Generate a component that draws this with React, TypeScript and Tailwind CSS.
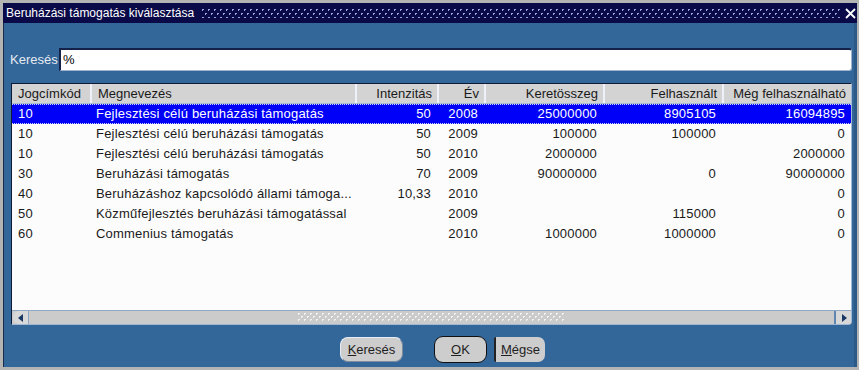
import React from 'react';

const rows = [
    ['10', 'Fejlesztési célú beruházási támogatás', '50', '2008', '25000000', '8905105', '16094895'],
    ['10', 'Fejlesztési célú beruházási támogatás', '50', '2009', '100000', '100000', '0'],
    ['10', 'Fejlesztési célú beruházási támogatás', '50', '2010', '2000000', '', '2000000'],
    ['30', 'Beruházási támogatás', '70', '2009', '90000000', '0', '90000000'],
    ['40', 'Beruházáshoz kapcsolódó állami támoga...', '10,33', '2010', '', '', '0'],
    ['50', 'Közműfejlesztés beruházási támogatással', '', '2009', '', '115000', '0'],
    ['60', 'Commenius támogatás', '', '2010', '1000000', '1000000', '0'],
];

const heads = ['Jogcímkód', 'Megnevezés', 'Intenzitás', 'Év', 'Keretösszeg', 'Felhasznált', 'Még felhasználható'];

const cols = 'grid grid-cols-[78px_265px_82px_47px_119px_119px_129px]';

const Dots = ({color, w, h}: {color: string; w: number; h: number}) => (
    <svg width="100%" height="100%" className="block">
        <defs>
            <pattern id={'p' + color.slice(1)} width={w} height={h} patternUnits="userSpaceOnUse">
                <rect x="0" y="0" width="2" height="1" fill={color}/>
                <rect x="0" y="1" width="1" height="1" fill={color}/>
                <rect x={w / 2} y={h / 2} width="2" height="1" fill={color}/>
                <rect x={w / 2} y={h / 2 + 1} width="1" height="1" fill={color}/>
            </pattern>
        </defs>
        <rect width="100%" height="100%" fill={'url(#p' + color.slice(1) + ')'}/>
    </svg>
);

const App = () => {
    return (
        <div className="w-[859px] h-[370px] bg-[#b4b4b4] pl-[3px] pt-[3px] pr-[2px] pb-[3px] flex flex-col font-['Liberation_Sans',Arial,sans-serif] text-[13px] overflow-hidden">
            {/* title bar */}
            <div className="h-[20px] bg-[#0a0a48] flex items-center pl-[3px] pr-[1px] shrink-0">
                <span className="text-white text-[12px] whitespace-nowrap">Beruházási támogatás kiválasztása</span>
                <div className="flex-1 h-[9px] ml-[8px] mr-[5px]">
                    <Dots color="#9aa4dc" w={6} h={8}/>
                </div>
                <svg width="11" height="11" viewBox="0 0 11 11">
                    <path d="M1 1 L10 10 M10 1 L1 10" stroke="#ffffff" strokeWidth="1.8"/>
                </svg>
            </div>

            {/* body */}
            <div className="flex-1 bg-[#336699] border-l border-[#1c2c48] border-r-[3px] border-r-[#2b5a88] pl-[7px] pr-[2px] pt-[25px] flex flex-col">
                <div className="flex h-[23px] items-center">
                    <span className="w-[49px] -ml-[1px] text-[#e6ebf2]">Keresés</span>
                    <div className="flex-1 h-full bg-white border-t-2 border-l-2 border-[#14224a] border-r border-b border-r-[#9fb4cc] border-b-[#9fb4cc] rounded-r-[3px] flex items-center pl-[2px] text-black">
                        %
                    </div>
                </div>

                {/* table */}
                <div className="mt-[12px] h-[242px] border border-[#0e1a38] border-r-[#9fb8d4] border-b-[#9fb8d4] rounded-br-[4px] bg-[#fcfcfc] flex flex-col">
                    <div className={cols + ' h-[20px] bg-[#d3d3d3] border-b border-[#aabbd0] text-[#1a1a1a]'}>
                        {heads.map((h, i) => (
                            <div key={h}
                                 className={(i > 0 ? 'border-l-2 border-[#eef2f8] ' : '') + (i < 2 ? 'pl-[6px] justify-start ' : 'pr-[5px] justify-end ') + 'flex items-center whitespace-nowrap overflow-hidden'}>
                                {h}
                            </div>
                        ))}
                    </div>
                    <div className="flex-1 flex flex-col">
                        {rows.map((r, ri) => (
                            <div key={ri}
                                 className={cols + ' h-[20px] ' + (ri === 0 ? 'bg-[#0000f8] text-white border-y border-dotted border-[#c8d0ff]' : 'text-[#1a1a1a]')}>
                                {r.map((c, ci) => (
                                    <div key={ci}
                                         className={(ci < 2 ? 'pl-[6px] justify-start ' : 'pr-[6px] justify-end ') + 'flex items-center whitespace-nowrap overflow-hidden tracking-[0.2px]'}>
                                        {c}
                                    </div>
                                ))}
                            </div>
                        ))}
                    </div>
                    {/* scrollbar */}
                    <div className="h-[14px] border-t border-[#8fa8c6] bg-[#cbcbcb] flex items-stretch">
                        <div className="w-[16px] ml-[1px] bg-[#d8d8d8] rounded-l-[6px] border-r border-[#8fa8c6] flex items-center justify-center">
                            <svg width="6" height="8" viewBox="0 0 6 8"><path d="M5 0 L0 4 L5 8 Z" fill="#1b3766"/></svg>
                        </div>
                        <div className="flex-1 flex">
                            <div className="w-[269px]"/>
                            <div className="w-[267px] h-full py-[2px]">
                                <Dots color="#f2f2f2" w={6} h={6}/>
                            </div>
                            <div className="flex-1"/>
                        </div>
                        <div className="w-[17px] bg-[#d8d8d8] border-l-2 border-[#5f86b0] rounded-br-[4px] flex items-center justify-center">
                            <svg width="6" height="8" viewBox="0 0 6 8"><path d="M1 0 L6 4 L1 8 Z" fill="#1b3766"/></svg>
                        </div>
                    </div>
                </div>

                {/* buttons */}
                <div className="mt-[11px] h-[27px] flex items-center justify-center pl-[22px] text-[#1e1e1e]">
                    <button className="w-[63px] h-[25px] rounded-[8px] bg-[#cdcdcd] border border-[#e6ecf4] border-b-[#7d8da0] border-r-[#7d8da0] flex items-center justify-center">
                        <span><span className="underline">K</span>eresés</span>
                    </button>
                    <button className="ml-[31px] w-[53px] h-[27px] rounded-[9px] bg-[#cdcdcd] border border-[#101010] flex items-center justify-center">
                        <span><span className="underline">O</span>K</span>
                    </button>
                    <button className="ml-[7px] w-[51px] h-[25px] rounded-r-[7px] rounded-l-[2px] bg-[#cdcdcd] border-l-2 border-[#222222] flex items-center justify-center">
                        <span><span className="underline">M</span>égse</span>
                    </button>
                </div>
            </div>
        </div>
    );
};

export default App;
